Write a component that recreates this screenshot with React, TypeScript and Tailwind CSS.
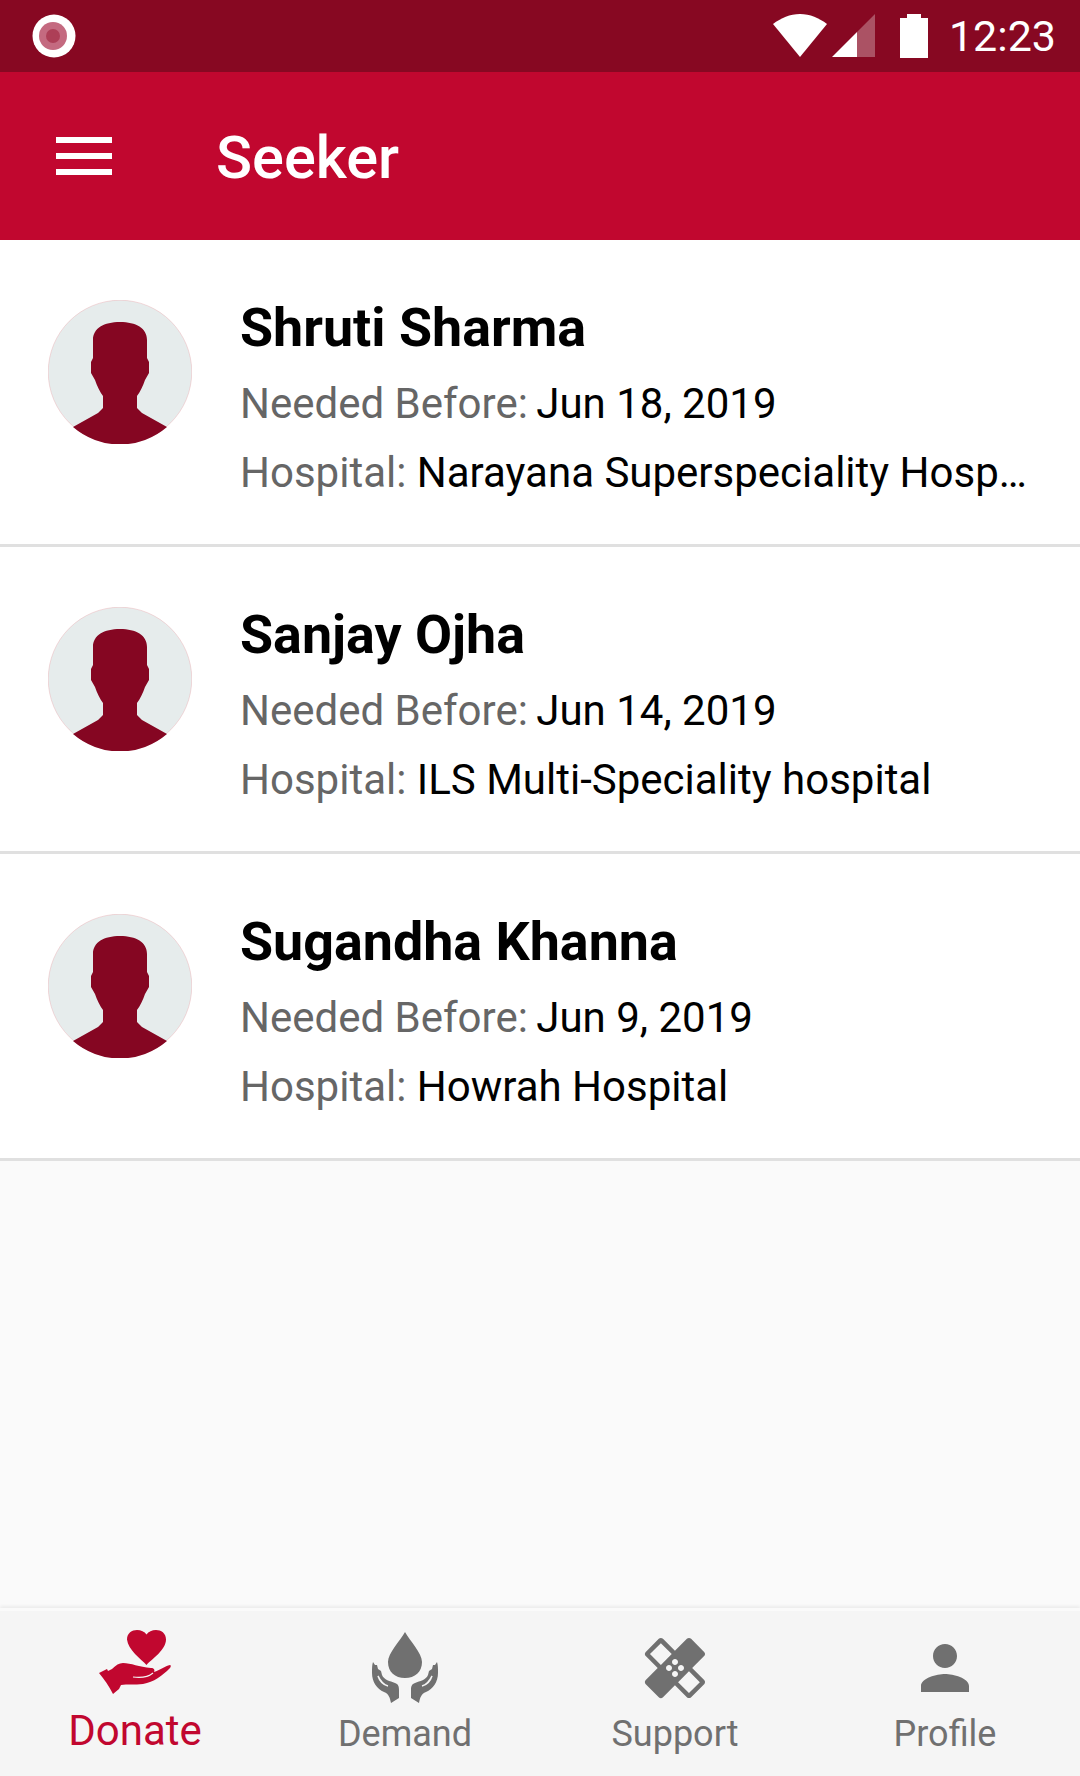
const seekers = [
  { name: "Shruti Sharma", date: "Jun 18, 2019", hospital: "Narayana Superspeciality Hospital, Howrah" },
  { name: "Sanjay Ojha", date: "Jun 14, 2019", hospital: "ILS Multi-Speciality hospital" },
  { name: "Sugandha Khanna", date: "Jun 9, 2019", hospital: "Howrah Hospital" },
];

const Avatar = () => (
  <svg viewBox="0 0 144 144" className="w-[144px] h-[144px] shrink-0">
    <circle cx="72" cy="72" r="71.75" fill="#e6ecec" stroke="#e8b4b8" strokeWidth="0.5" />
    <path
      d="M72 22C56 22 45 28 45 40V58L43 62V73L47 80C49 86 52 92 55 96V108L50 113L25 127A72 72 0 0 0 119 127L94 113L89 108V96C92 92 95 86 97 80L101 73V62L99 58V40C99 28 88 22 72 22Z"
      fill="#850622"
    />
  </svg>
);

const StatusBar = () => (
  <div className="h-[72px] bg-[#870822] flex items-center shrink-0 pl-[32px] pr-[24px]">
    <svg viewBox="0 0 44 44" className="w-[44px] h-[44px]">
      <circle cx="22" cy="22" r="21.5" fill="#fff" />
      <circle cx="21" cy="22" r="14" fill="#c46a80" />
      <circle cx="21" cy="22" r="7" fill="#ad3f57" />
    </svg>
    <div className="ml-auto flex items-center">
      <svg viewBox="0 0 54 44" className="w-[54px] h-[44px]">
        <path d="M0 10C8 4 17 0 27 0S46 4 54 10L27 43Z" fill="#fff" />
      </svg>
      <svg viewBox="0 0 43 44" className="w-[43px] h-[44px] ml-[5px]">
        <path d="M25 18L0 43H25Z" fill="#fff" />
        <path d="M25 18L43 0V43H25Z" fill="#fff" fillOpacity="0.3" />
      </svg>
      <svg viewBox="0 0 28 44" className="w-[28px] h-[44px] ml-[25px]">
        <path d="M7 0H21V4H28V44H0V4H7Z" fill="#fff" />
      </svg>
      <span className="ml-[21px] text-[43px] leading-none text-white">12:23</span>
    </div>
  </div>
);

const MenuIcon = () => (
  <svg viewBox="0 0 56 38" className="w-[56px] h-[38px] -mt-[1px]" fill="#fff">
    <rect x="0" y="0" width="56" height="6" />
    <rect x="0" y="16" width="56" height="6" />
    <rect x="0" y="32" width="56" height="6" />
  </svg>
);

const AppBar = () => (
  <div className="h-[168px] bg-[#c1072f] flex items-center shrink-0 pl-[56px]">
    <MenuIcon />
    <span className="ml-[104px] mt-[6px] text-[59.5px] font-medium text-white">Seeker</span>
  </div>
);

const DonateIcon = () => (
  <svg viewBox="0 0 72 72" className="w-[72px] h-[72px]">
    <path
      d="M47.5 39C42 33 29 24 28 13.5C28 7 33 4 38 4C42 4 45.5 5.5 47.5 8.5C49.5 5.5 53 4 57 4C62 4 67 7 67 13.5C67 24 53 33 47.5 39Z"
      fill="#c1072f"
    />
    <path
      d="M0 47L8 43L9 45L13 43C17 39 20 37 24 37C32 37 40 41 52 42C55 42 56 44 55 46C61 44 66 40 71 39C72 39 72 41 71 42C63 50 55 56 44 58C36 59 28 58 22 59L20 63L14 68C10 60 5 53 0 47Z"
      fill="#c1072f"
    />
    <path d="M34 51C41 52 48 52 54 47" fill="none" stroke="#f5f5f5" strokeWidth="1.2" />
  </svg>
);

const DemandIcon = () => (
  <svg viewBox="0 0 72 72" className="w-[72px] h-[72px]">
    <path d="M36 0C31 9 19 21 19 30C19 40 26 46 36 46S53 40 53 30C53 21 41 9 36 0Z" fill="#707070" />
    <path
      d="M4 30L6 33L8 33L9 37L12 39L13 43C15 48 21 49 26 51C29 52 30 54 30 58V66L22 71C21 66 20 62 15 60C8 57 3 50 3 41C3 36 3 33 4 30Z"
      fill="#707070"
    />
    <path d="M68 30L66 33L64 33L63 37L60 39L59 43C57 48 51 49 46 51C43 52 42 54 42 58V66L50 71C51 66 52 62 57 60C64 57 69 50 69 41C69 36 69 33 68 30Z" fill="#707070" />
    <path d="M9 44C12 50 15 53 19 54C15 53 11 50 9 44Z" fill="none" stroke="#f5f5f5" strokeWidth="1.5" />
    <path d="M63 44C60 50 57 53 53 54C57 53 61 50 63 44Z" fill="none" stroke="#f5f5f5" strokeWidth="1.5" />
  </svg>
);

const SupportIcon = () => (
  <svg viewBox="0 0 24 24" className="w-[72px] h-[72px]" fill="#707070">
    <path d="M17.73 12.02l3.98-3.98c.39-.39.39-1.02 0-1.41l-4.34-4.34c-.39-.39-1.02-.39-1.41 0l-3.98 3.98L8 2.29C7.8 2.1 7.55 2 7.29 2c-.25 0-.51.1-.7.29L2.25 6.63c-.39.39-.39 1.02 0 1.41l3.98 3.98L2.25 16c-.39.39-.39 1.02 0 1.41l4.34 4.34c.39.39 1.02.39 1.41 0l3.98-3.98 3.98 3.98c.2.2.45.29.71.29.26 0 .51-.1.71-.29l4.34-4.34c.39-.39.39-1.02 0-1.41l-3.99-3.98zM12 9c.55 0 1 .45 1 1s-.45 1-1 1-1-.45-1-1 .45-1 1-1zm-4.71 1.96L3.66 7.34l3.63-3.63 3.62 3.62-3.62 3.63zM10 13c-.55 0-1-.45-1-1s.45-1 1-1 1 .45 1 1-.45 1-1 1zm2 2c-.55 0-1-.45-1-1s.45-1 1-1 1 .45 1 1-.45 1-1 1zm2-4c.55 0 1 .45 1 1s-.45 1-1 1-1-.45-1-1 .45-1 1-1zm2.66 9.34l-3.63-3.62 3.63-3.63 3.62 3.62-3.62 3.63z" />
  </svg>
);

const ProfileIcon = () => (
  <svg viewBox="0 0 24 24" className="w-[72px] h-[72px]" fill="#707070">
    <path d="M12 12c2.21 0 4-1.79 4-4s-1.79-4-4-4-4 1.79-4 4 1.79 4 4 4zm0 2c-2.67 0-8 1.34-8 4v2h16v-2c0-2.66-5.33-4-8-4z" />
  </svg>
);

const tabs = [
  { label: "Demand", Icon: DemandIcon },
  { label: "Support", Icon: SupportIcon },
  { label: "Profile", Icon: ProfileIcon },
];

const App = () => {
  return (
    <div className="w-[1080px] h-[1776px] flex flex-col bg-[#fafafa] font-['Roboto',sans-serif] overflow-hidden">
      <StatusBar />
      <AppBar />

      <div className="flex-1">
        {seekers.map((s) => (
          <div key={s.name} className="h-[307px] bg-white border-b-[3px] border-[#e0e0e0] flex pl-[48px] pr-[48px] pt-[60px]">
            <Avatar />
            <div className="ml-[48px] min-w-0 flex-1 -mt-[4px]">
              <div className="text-[53.8px] leading-[64px] font-bold text-black">{s.name}</div>
              <div className="mt-[9px] text-[42px] leading-[69px] text-black truncate">
                <span className="text-[#666666] mr-[-2px]">Needed Before: </span>
                {s.date}
              </div>
              <div className="text-[42px] leading-[69px] text-black truncate">
                <span className="text-[#666666]">Hospital: </span>
                {s.hospital}
              </div>
            </div>
          </div>
        ))}
      </div>

      <div className="h-[168px] bg-[#f5f5f5] flex shrink-0 border-t-[3px] border-[#fafafa] shadow-[0_-2px_3px_rgba(0,0,0,0.06)]">
        <div className="w-[270px] flex flex-col items-center pt-[15px]">
          <DonateIcon />
          <span className="mt-[8px] text-[42px] leading-[50px] text-[#c1072f]">Donate</span>
        </div>
        {tabs.map(({ label, Icon }) => (
          <div key={label} className="w-[270px] flex flex-col items-center pt-[21px]">
            <Icon />
            <span className="mt-[5px] text-[36px] leading-[50px] text-[#707070]">{label}</span>
          </div>
        ))}
      </div>
    </div>
  );
};

export default App;
